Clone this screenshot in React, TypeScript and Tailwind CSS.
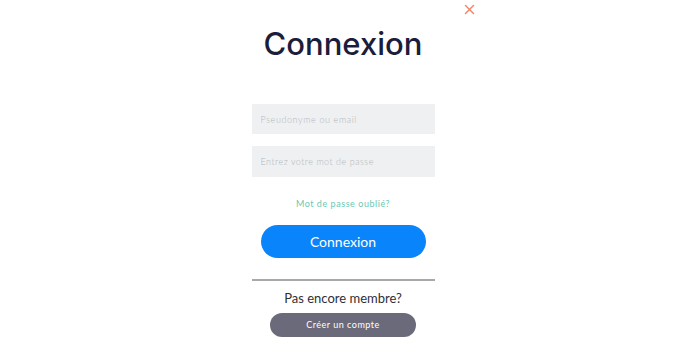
import { useState } from 'react';

export default function App() {
  const [pseudo, setPseudo] = useState('');
  const [password, setPassword] = useState('');

  return (
    <div className="w-[686px] h-[360px] bg-white relative font-['Lato',sans-serif] overflow-hidden">
      <button className="absolute left-[463px] top-[3px] w-[12px] h-[12px] flex items-center justify-center text-[#f0876a]" aria-label="Fermer">
        <svg width="11" height="11" viewBox="0 0 11 11" fill="none" stroke="currentColor" strokeWidth="1.5" strokeLinecap="round">
          <path d="M1.5 1.5l8 8M9.5 1.5l-8 8" />
        </svg>
      </button>

      <div className="flex flex-col items-center">
        <h1 className="mt-[24px] text-[31px] leading-[40px] font-medium text-[#1b1d3c] font-['Inter',sans-serif]">
          Connexion
        </h1>

        <div className="mt-[40px] w-[183px] flex flex-col gap-[12px]">
          <input
            value={pseudo}
            onChange={(e) => setPseudo(e.target.value)}
            placeholder="Pseudonyme ou email"
            className="h-[30px] w-full bg-[#eef0f2] px-[9px] text-[9px] tracking-[0.6px] font-light text-[#555] placeholder:text-[#b3b7bb] outline-none"
          />
          <input
            type="password"
            value={password}
            onChange={(e) => setPassword(e.target.value)}
            placeholder="Entrez votre mot de passe"
            className="h-[31px] w-full bg-[#eef0f2] px-[9px] text-[9px] tracking-[0.5px] font-light text-[#555] placeholder:text-[#b3b7bb] outline-none"
          />
        </div>

        <a href="#" className="mt-[21px] text-[9px] leading-[12px] tracking-[0.55px] text-[#6cc7b2]">
          Mot de passe oublié?
        </a>

        <button className="mt-[15px] w-[165px] h-[33px] rounded-full bg-[#0a84fb] text-white text-[14px]">
          Connexion
        </button>

        <div className="mt-[21px] w-[183px] h-[2px] bg-[#a9a9a9]" />

        <p className="mt-[9px] text-[13px] leading-[16px] text-[#2f2f36]">Pas encore membre?</p>

        <button className="mt-[7px] w-[146px] h-[24px] rounded-full bg-[#6b6a7b] text-white text-[9px] tracking-[0.5px]">
          Créer un compte
        </button>
      </div>
    </div>
  );
}
